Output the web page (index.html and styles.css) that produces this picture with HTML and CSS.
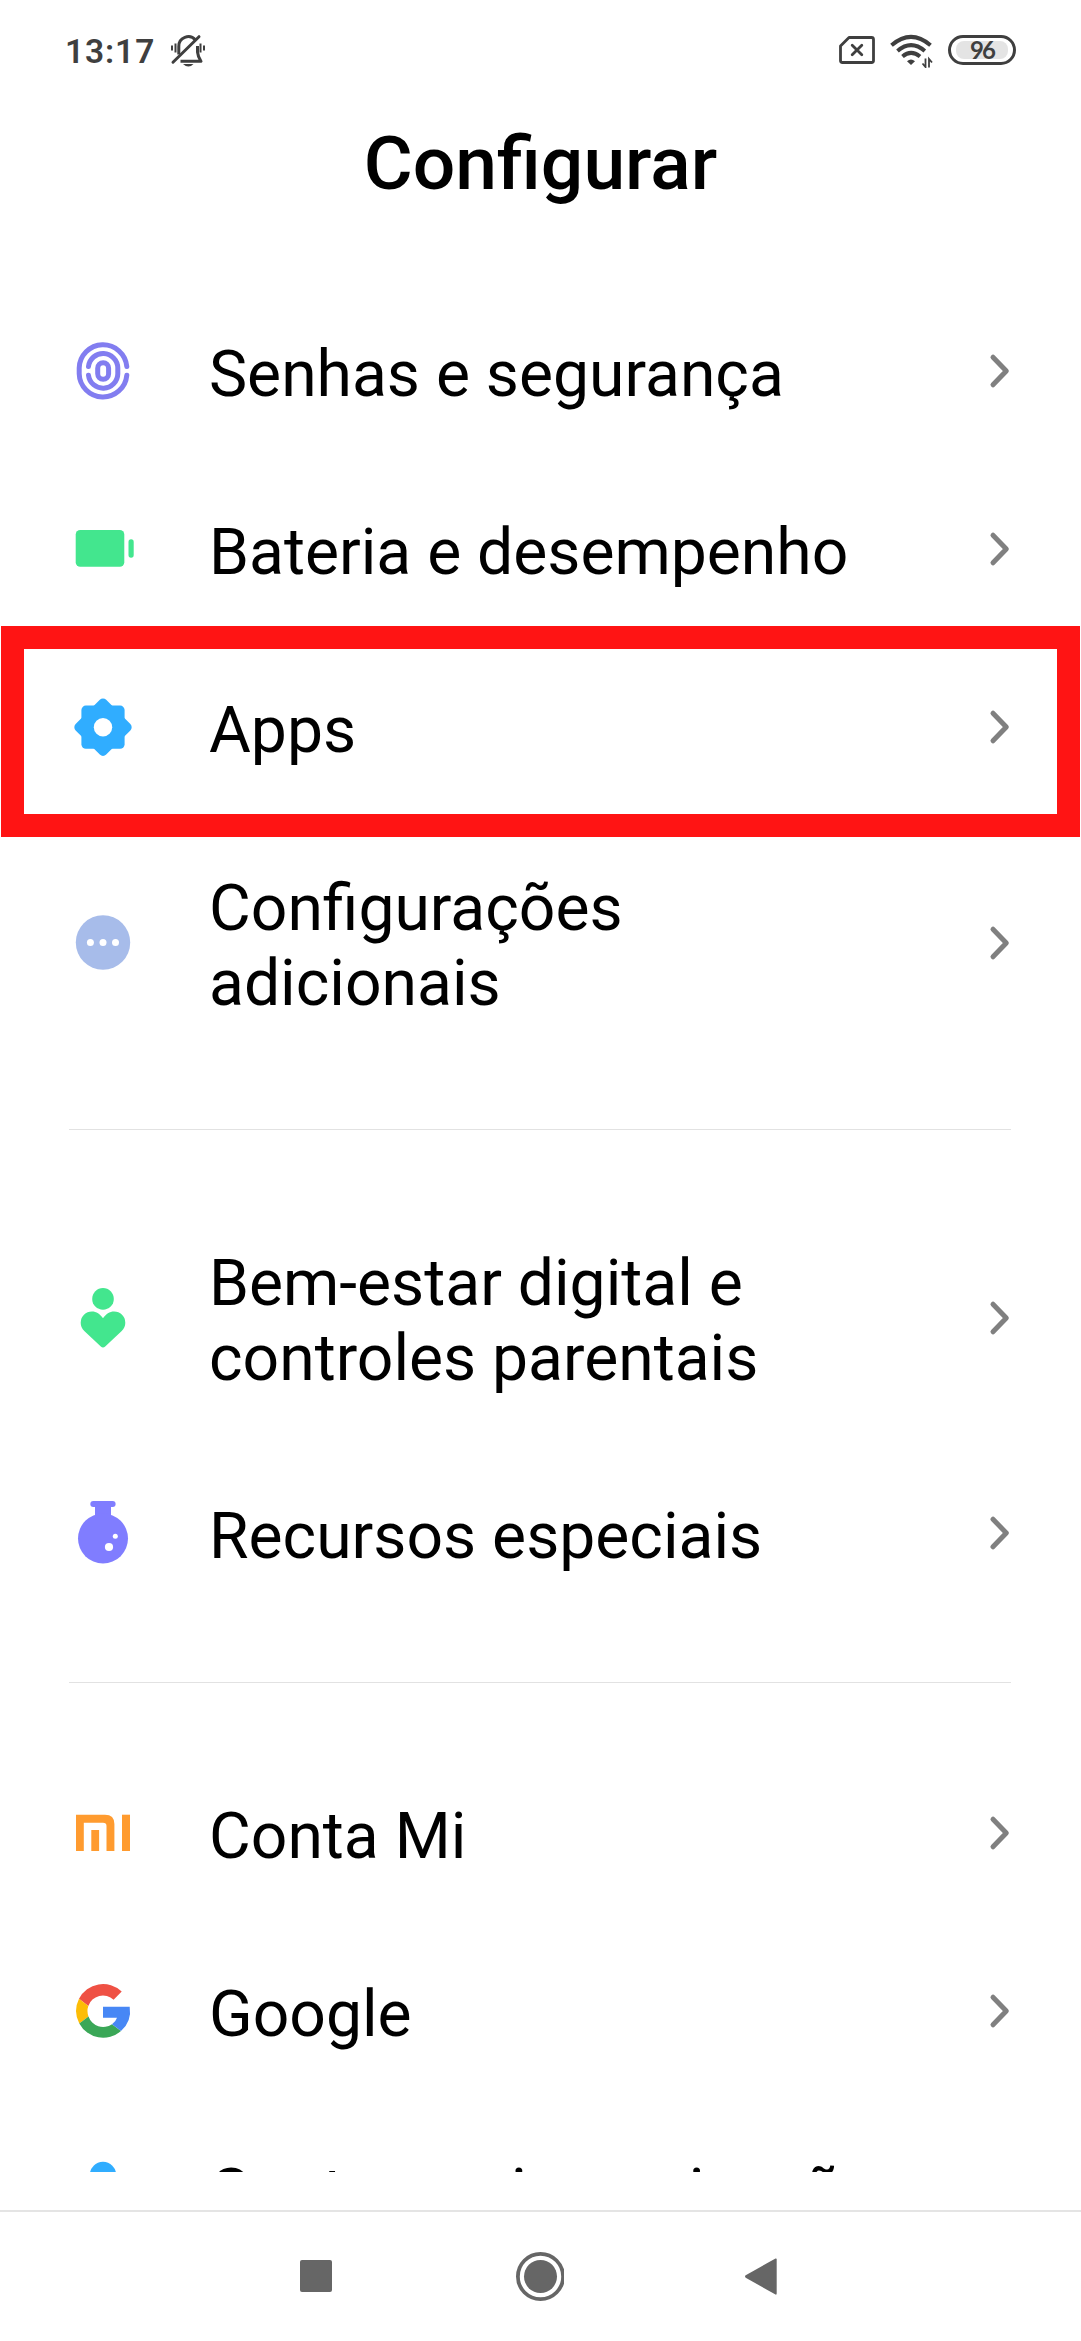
FILE: index.html
```html
<!DOCTYPE html>
<html lang="pt-BR">
<head>
<meta charset="utf-8">
<title>Configurar</title>
<link rel="stylesheet" href="styles.css">
</head>
<body>
<svg width="0" height="0" class="defs">
  <symbol id="chevron" viewBox="0 0 24 38"><path d="M5 5.2 18.3 19 5 32.8" fill="none" stroke="#808080" stroke-width="5" stroke-linecap="round" stroke-linejoin="round"/></symbol>
</svg>
<div class="screen">
  <header class="status">
    <span class="time">13:17</span>
    <svg class="bell" width="40" height="36" viewBox="168 32 40 36" fill="none" stroke="#3f3f3f">
      <path d="M178.800 54.500V46.500A9.500 9.500 0 0 1 195.500 40" stroke-width="3"/>
      <path d="M197.500 46V52Q198 57 201 61.300H180.500" stroke-width="3" stroke-linejoin="round"/>
      <path d="M173 62.200 199 36.700" stroke-width="3" stroke-linecap="round"/>
      <path d="M172 45.500V50.500M175.500 43.500V52.500M200.500 43.500V52.500M204 45.500V50.500" stroke-width="2"/>
      <path d="M183 64H193.500Q188.500 69 183 64Z" fill="#3f3f3f" stroke="none"/>
    </svg>
    <span class="spacer"></span>
    <svg width="38" height="36" viewBox="838 32 38 36" fill="none" stroke="#3f3f3f" stroke-width="2.800" stroke-linecap="round" stroke-linejoin="round">
      <path d="M849 37.500H871.500Q873.500 37.500 873.500 39.500V60.500Q873.500 62.500 871.500 62.500H842.500Q840.500 62.500 840.500 60.500V46Z"/>
      <path d="M852.200 45.200 861.800 54.800M861.800 45.200 852.200 54.800"/>
    </svg>
    <svg class="wifi" width="44" height="36" viewBox="889 32 44 36" fill="none" stroke="#3f3f3f" stroke-width="4">
      <path d="M891.500 45.300Q911 28.500 930.500 45.300"/>
      <path d="M897.500 51Q911 39.300 924.800 51"/>
      <path d="M902.500 56.500Q911 49.300 920 56.500"/>
      <path d="M907 61.300Q911 57.800 915 61.300L911 65Z" fill="#3f3f3f" stroke="none"/>
      <path d="M925.500 58.500V67L922.500 63.500M929 67.500V59L932 62.500" stroke-width="1.800"/>
    </svg>
    <span class="charge"><span class="level">96</span></span>
  </header>

  <h1 class="title">Configurar</h1>

  <main class="list">
    <section class="group">
      <a class="row">
        <svg class="icon" viewBox="0 0 60 60" fill="none" stroke="#827df0" stroke-width="5" stroke-linecap="round">
          <path d="M53.800 25.500A23.850 23.850 0 0 0 6.200 27V32.700A23.850 23.850 0 0 0 53.800 34.200"/>
          <path d="M15.500 25.500A14.700 14.700 0 0 1 44.800 26.800V32.900A14.700 14.700 0 0 1 15.500 34.200"/>
          <rect x="24.700" y="21.700" width="10.900" height="16.600" rx="5.450"/>
        </svg>
        <span class="label">Senhas e segurança</span>
        <svg class="chevron"><use href="#chevron"/></svg>
      </a>
      <a class="row">
        <svg class="icon" viewBox="0 0 60 60" fill="#43e68e">
          <rect x="2.700" y="11" width="48.600" height="36.700" rx="4.500"/>
          <rect x="55.500" y="20.300" width="5.200" height="18.400" rx="2.600"/>
        </svg>
        <span class="label">Bateria e desempenho</span>
        <svg class="chevron"><use href="#chevron"/></svg>
      </a>
      <a class="row selected">
        <svg class="icon" viewBox="0 0 60 60" fill="#30adff">
          <rect x="8.400" y="8.600" width="43.200" height="43.200" rx="4.500"/>
          <rect x="8.400" y="8.600" width="43.200" height="43.200" rx="4.500" transform="rotate(45 30 30.200)"/>
          <circle cx="30" cy="30.200" r="9.200" fill="#fff"/>
        </svg>
        <span class="label">Apps</span>
        <svg class="chevron"><use href="#chevron"/></svg>
      </a>
      <a class="row">
        <svg class="icon" viewBox="0 0 60 60" fill="#fff">
          <circle cx="30" cy="29.500" r="27.200" fill="#a7bcea"/>
          <circle cx="17.400" cy="29.500" r="3.500"/><circle cx="30" cy="29.500" r="3.500"/><circle cx="42.500" cy="29.500" r="3.500"/>
        </svg>
        <span class="label">Configurações<br>adicionais</span>
        <svg class="chevron"><use href="#chevron"/></svg>
      </a>
    </section>
    <section class="group">
      <a class="row">
        <svg class="icon" viewBox="0 0 60 60" fill="#43e68e">
          <circle cx="30" cy="10.900" r="10.800"/>
          <path d="M30 30.300C27 26 23.500 23.500 18.900 23.500A11.200 11.200 0 0 0 7.700 34.700C7.700 38 9 40.800 11.300 43.100L27.800 58.600Q30 60.300 32.200 58.600L48.700 43.100C51 40.800 52.300 38 52.300 34.700A11.200 11.200 0 0 0 41.100 23.500C36.500 23.500 33 26 30 30.300Z"/>
        </svg>
        <span class="label">Bem-estar digital e<br>controles parentais</span>
        <svg class="chevron"><use href="#chevron"/></svg>
      </a>
      <a class="row">
        <svg class="icon" viewBox="0 0 60 60" fill="#807dff">
          <rect x="17.300" y="-2" width="25.300" height="6" rx="3"/>
          <rect x="22" y="0" width="16" height="16"/>
          <circle cx="30" cy="35.500" r="25"/>
          <circle cx="42.300" cy="33.300" r="2.500" fill="#fff"/><circle cx="36" cy="44" r="4.100" fill="#fff"/>
        </svg>
        <span class="label">Recursos especiais</span>
        <svg class="chevron"><use href="#chevron"/></svg>
      </a>
    </section>
    <section class="group">
      <a class="row">
        <svg class="icon" viewBox="0 0 60 60" fill="#ff9b2f">
          <path d="M3 11.700H32Q41.400 11.700 41.400 21V48H33.500V23Q33.500 19.700 30 19.700H10.800V48H3Z"/>
          <rect x="18.300" y="27" width="7.800" height="21"/><rect x="49" y="11.700" width="8" height="36.300"/>
        </svg>
        <span class="label">Conta Mi</span>
        <svg class="chevron"><use href="#chevron"/></svg>
      </a>
      <a class="row">
        <svg class="icon" viewBox="0 0 60 60">
          <path fill="#ef5144" d="M6 17.800A27 27 0 0 1 48.700 10.500L40.600 18.700A15.500 15.500 0 0 0 15.300 25Z"/>
          <path fill="#fdbd06" d="M6 17.800A27 27 0 0 0 6.300 42.500L15.500 35.500A15.500 15.500 0 0 1 15.300 25Z"/>
          <path fill="#3aa757" d="M6.300 42.500A27 27 0 0 0 48 50L39 43.200A15.500 15.500 0 0 1 15.500 35.500Z"/>
          <path fill="#4787f5" d="M48 50A27 27 0 0 0 56.700 25.700H30V36.700H44Q42.800 40.600 39 43.200Z"/>
        </svg>
        <span class="label">Google</span>
        <svg class="chevron"><use href="#chevron"/></svg>
      </a>
      <a class="row">
        <svg class="icon" viewBox="0 0 60 60" fill="#30adff">
          <circle cx="30" cy="16" r="13.200"/><path d="M5 56Q5 33 30 33T55 56Z"/>
        </svg>
        <span class="label">Contas e sincronização</span>
        <svg class="chevron"><use href="#chevron"/></svg>
      </a>
    </section>
  </main>

  <nav class="navbar">
    <svg width="34" height="50" viewBox="299 2252 34 50"><rect x="300" y="2260" width="32" height="32" rx="2" fill="#666"/></svg>
    <svg width="50" height="50" viewBox="516 2252 50 50"><circle cx="542.500" cy="2276.500" r="22.600" fill="none" stroke="#666" stroke-width="3.800"/><circle cx="542.500" cy="2276.500" r="16.500" fill="#666"/></svg>
    <svg width="34" height="50" viewBox="744 2252 34 50"><path d="M745.700 2275.300 775.500 2258.500Q776.700 2258 776.700 2259.500V2293.500Q776.700 2295 775.500 2294.500L745.700 2277.700Q744.300 2276.500 745.700 2275.300Z" fill="#666"/></svg>
  </nav>
</div>
</body>
</html>
```
FILE: styles.css
```css
body {
  margin: 0;
  background: #fff;
  color: #000;
  font-family: Roboto, "Liberation Sans", sans-serif;
}

.defs {
  display: block;
}

.screen {
  display: flex;
  flex-direction: column;
  height: 2341px;
  overflow: hidden;
}

.status {
  display: flex;
  align-items: center;
  box-sizing: border-box;
  height: 100px;
  padding: 0 65px 0 65px;
  color: #3f3f3f;
}

.time {
  width: 103px;
  padding-top: 2px;
  font-size: 33.5px;
  font-weight: 600;
  letter-spacing: 0.9px;
  white-space: nowrap;
}

.spacer {
  flex: 1;
}

.wifi {
  margin: 0 15px 0 13px;
}

.charge {
  display: flex;
  box-sizing: border-box;
  width: 68px;
  height: 30px;
  padding: 3px 5px;
  border: 3px solid #3f3f3f;
  border-radius: 15px;
}

.level {
  flex: 1;
  border-radius: 8px;
  background: #e4e4e4;
  font-family: Lato, Roboto, sans-serif;
  font-size: 24px;
  font-weight: 700;
  line-height: 18px;
  letter-spacing: -2px;
  text-align: center;
}

.title {
  height: 182px;
  margin: 0;
  font-size: 75px;
  font-weight: 500;
  line-height: 127px;
  text-align: center;
}

.list {
  height: 1890px;
  overflow: hidden;
}

.group + .group::before {
  content: "";
  display: block;
  height: 1px;
  margin: 60px 70px 61px 69px;
  background: #e2e2e2;
}

.row {
  position: relative;
  display: flex;
  align-items: center;
  padding: 0 69px 0 73px;
}

.selected::after {
  content: "";
  position: absolute;
  inset: -12px 1px -21px;
  border: 23px solid #ff1414;
}

.icon {
  flex: none;
  width: 60px;
  height: 60px;
  overflow: visible;
}

.label {
  flex: 1;
  padding: 55px 0 48px 76px;
  font-size: 64.2px;
  line-height: 75px;
  white-space: nowrap;
}

.chevron {
  flex: none;
  width: 24px;
  height: 38px;
}

.navbar {
  display: flex;
  justify-content: space-between;
  box-sizing: border-box;
  height: 131px;
  margin-top: 38px;
  padding: 40px 303px 0 299px;
  border-top: 2px solid #e4e4e4;
}
```
